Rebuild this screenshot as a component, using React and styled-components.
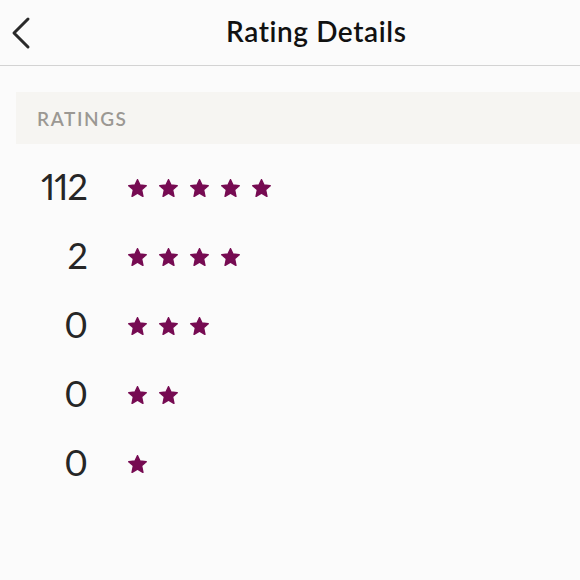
import React from "react";
import styled, { createGlobalStyle } from "styled-components";

const Global = createGlobalStyle`
  html, body { margin: 0; padding: 0; background: #fbfbfb; }
  body { font-family: Lato, "Open Sans", sans-serif; }
`;

const Page = styled.div`
  width: 580px;
  height: 580px;
  background: #fbfbfb;
  overflow: hidden;
`;

const Header = styled.div`
  height: 66px;
  border-bottom: 1px solid #d3d3d3;
  box-sizing: border-box;
  display: grid;
  grid-template-columns: 40px 1fr;
  align-items: center;
`;

const BackButton = styled.button`
  border: none;
  background: none;
  padding: 0 0 0 10px;
  height: 40px;
  display: flex;
  align-items: center;
  cursor: pointer;
`;

const Title = styled.h1`
  margin: 0 0 4px 186px;
  font-family: Lato, sans-serif;
  font-weight: 600;
  font-size: 28px;
  color: #111;
  letter-spacing: 0.6px;
`;

const Section = styled.div`
  margin: 26px 0 0 16px;
  height: 52px;
  background: #f6f5f2;
  display: flex;
  align-items: center;
  padding-left: 21px;
`;

const SectionLabel = styled.span`
  font-family: Lato, sans-serif;
  font-weight: 600;
  font-size: 19px;
  letter-spacing: 1.6px;
  color: #9b9893;
`;

const List = styled.div`
  margin-top: 9px;
  display: flex;
  flex-direction: column;
`;

const Row = styled.div`
  height: 69px;
  display: flex;
  align-items: center;
`;

const Count = styled.span`
  width: 87px;
  text-align: right;
  font-family: Lato, sans-serif;
  font-weight: 400;
  font-size: 36px;
  font-variant-numeric: proportional-nums;
  letter-spacing: -1px;
  margin-right: -1px;
  color: #262626;
  line-height: 1;
  padding-bottom: 4px;
`;

const Stars = styled.div`
  margin-left: 42px;
  display: flex;
  gap: 12px;
`;

const Star = () => (
  <svg width="19" height="18" viewBox="0 0 20 19">
    <path
      d="M10 0.8 L12.6 6.3 L19.2 7.1 L14.3 11.4 L15.7 18.3 L10 14.9 L4.3 18.3 L5.7 11.4 L0.8 7.1 L7.4 6.3 Z"
      fill="#760b52"
      stroke="#760b52"
      strokeWidth="1.6"
      strokeLinejoin="round"
    />
  </svg>
);

const data = [
  { count: 112, stars: 5 },
  { count: 2, stars: 4 },
  { count: 0, stars: 3 },
  { count: 0, stars: 2 },
  { count: 0, stars: 1 },
];

export default function App() {
  return (
    <Page>
      <Global />
      <Header>
        <BackButton aria-label="Back">
          <svg width="22" height="34" viewBox="0 0 22 34">
            <path
              d="M18 3 L4 17 L18 31"
              fill="none"
              stroke="#2a2a2a"
              strokeWidth="3"
              strokeLinecap="round"
              strokeLinejoin="round"
            />
          </svg>
        </BackButton>
        <Title>Rating Details</Title>
      </Header>
      <Section>
        <SectionLabel>RATINGS</SectionLabel>
      </Section>
      <List>
        {data.map((d, i) => (
          <Row key={i}>
            <Count>{d.count}</Count>
            <Stars>
              {Array.from({ length: d.stars }).map((_, j) => (
                <Star key={j} />
              ))}
            </Stars>
          </Row>
        ))}
      </List>
    </Page>
  );
}
